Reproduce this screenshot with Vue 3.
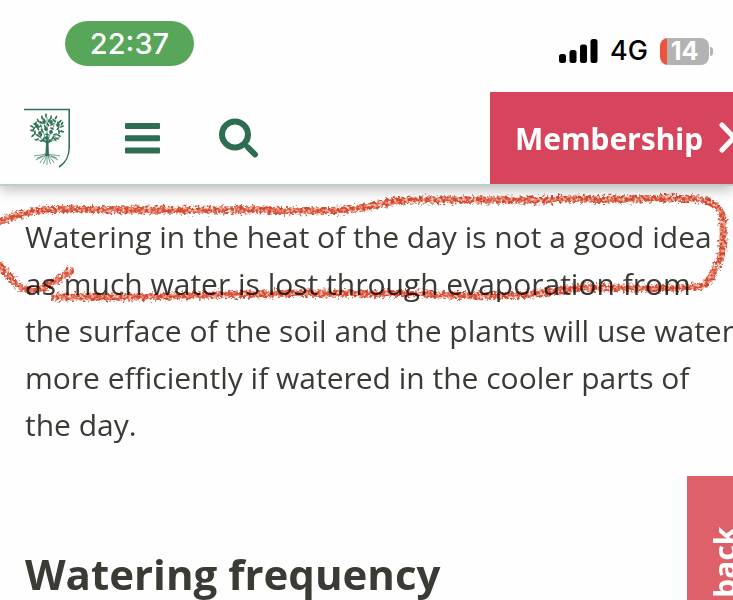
<script setup>
const paragraph = [
  'Watering in the heat of the day is not a good idea',
  'as much water is lost through evaporation from',
  'the surface of the soil and the plants will use water',
  'more efficiently if watered in the cooler parts of',
  'the day.',
]

const leaves = [
  [11, 16, 40], [14, 12, 60], [18, 9, 80], [22, 7, 90], [27, 9, 100], [32, 9, 120],
  [36, 13, 140], [38, 18, 160], [38, 23, 10], [35, 27, 30], [31, 31, 50], [26, 32, 20],
  [18, 32, 150], [13, 31, 160], [9, 27, 140], [8, 22, 10], [8, 18, 30], [14, 20, 60],
  [14, 27, 30], [17, 14, 40], [25, 12, 110], [30, 12, 40], [34, 20, 130], [31, 26, 160],
  [18, 22, 60], [17, 27, 120], [21, 18, 70], [28, 20, 20], [20, 30, 110], [11, 24, 90],
  [34, 15, 80], [20, 11, 50], [29, 29, 120], [10, 20, 130], [35, 23, 80], [23, 26, 10],
  [28, 16, 150], [12, 15, 100], [24, 16, 60], [16, 18, 160], [33, 30, 20], [38, 15, 120],
]

const fruits = [[13, 18], [20, 14], [27, 14], [34, 17], [22, 21], [27, 24], [16, 25], [23, 30]]
</script>

<template>
  <div class="page">
    <div class="status">
      <span class="clock">22:37</span>
      <div class="indicators">
        <svg class="signal" viewBox="0 0 39 25" aria-hidden="true">
          <rect x="0" y="15" width="7" height="9" rx="2.5" />
          <rect x="10.500" y="11" width="7" height="13" rx="2.500" />
          <rect x="21" y="5.500" width="7" height="18.500" rx="2.500" />
          <rect x="31.500" y="0" width="7" height="24" rx="2.500" />
        </svg>
        <span class="network">4G</span>
        <span class="battery">14</span>
      </div>
    </div>

    <header class="bar">
      <nav class="tools">
        <a class="logo" href="#" aria-label="Home">
          <svg viewBox="0 0 48 60" aria-hidden="true">
            <path class="line" d="M0 1.500H45.200V39C45.200 50 41 55 35 59" />
            <path class="trunk" d="M21.300 48L22 35L17 30L22.600 33L23 24L24 33L30 29L24.500 35L25 48Z" />
            <path
              class="twigs"
              d="M23 35L10 25M23 34L15 13M23 33L23 9M23 34L32 12M24 35L38 22M22 34L10 31M24 35L36 29"
            />
            <ellipse
              v-for="(l, i) in leaves"
              :key="i"
              :cx="l[0]"
              :cy="l[1] + 0.500"
              rx="2.200"
              ry="0.900"
              :transform="`rotate(${l[2]} ${l[0]} ${l[1] + 0.500})`"
            />
            <circle v-for="(f, i) in fruits" :key="'f' + i" :cx="f[0]" :cy="f[1]" r="1.900" />
            <path
              class="twigs"
              d="M22 46C19 47 15 47 10 48M22 46C19 49 15 50 12 52M22 47C20 50 17 52 16 55M22.500 47C22 51 20 53 19.500 56M23 46V57M24 47C24.500 51 26 53 26.500 56M24 47C26 50 29 52 30 55M24 46C27 49 31 50 34 52M24 46C27 47 31 47 36 48M19 48L13 50M27 48L33 50"
            />
          </svg>
        </a>
        <button class="icon" type="button" aria-label="Menu">
          <svg class="menu" viewBox="0 0 35 31" aria-hidden="true">
            <rect width="35" height="6" rx="1" />
            <rect y="12.300" width="35" height="6" rx="1" />
            <rect y="24.600" width="35" height="6" rx="1" />
          </svg>
        </button>
        <button class="icon" type="button" aria-label="Search">
          <svg class="search" viewBox="0 0 40 40" aria-hidden="true">
            <circle cx="16" cy="16.500" r="13" />
            <path class="neck" d="M24 24.500L30 30.500" />
            <path class="handle" d="M29.500 30L36 36.500" />
          </svg>
        </button>
      </nav>
      <a class="membership" href="#">
        <span>Membership</span>
        <svg viewBox="0 0 20 32" aria-hidden="true">
          <path d="M4 3L16 15.500L4 28" />
        </svg>
      </a>
    </header>

    <main class="content">
      <p><span v-for="line in paragraph" :key="line" class="row">{{ line }}</span></p>
      <h2>Watering frequency</h2>
    </main>

    <svg class="crayon" viewBox="0 0 733 130" aria-hidden="true">
      <defs>
        <filter id="wax" filterUnits="userSpaceOnUse" x="-10" y="-5" width="760" height="140" color-interpolation-filters="sRGB">
          <feTurbulence type="fractalNoise" baseFrequency="0.350" numOctaves="2" seed="4" result="noise" />
          <feDisplacementMap in="SourceGraphic" in2="noise" scale="9" xChannelSelector="R" yChannelSelector="G" result="rough" />
          <feColorMatrix in="noise" type="matrix" values="0 0 0 0 0  0 0 0 0 0  0 0 0 0 0  0 0 2 0 -0.200" result="grain" />
          <feComposite in="rough" in2="grain" operator="in" result="mark" />
          <feGaussianBlur in="mark" stdDeviation="0.700" />
        </filter>
      </defs>
      <g filter="url(#wax)">
        <path d="M-6 34C10 27 25 22 45 19.500C100 18 170 22 240 19.500C280 20 310 22 345 20C368 18 378 13 400 10.500C450 8 510 12 570 9C620 11 660 6 698 9C718 12 724 21 723 37C724 55 722 69 714 82C708 93 704 97 696 97C660 100 620 97 580 98C560 99 550 103 530 104C500 107 470 106 440 105C400 102 370 105 330 103C240 103 180 107 120 107L52 107" />
        <path d="M-6 69C4 77 8 88 20 97C36 105 52 95 73 79" />
      </g>
    </svg>

    <button class="feedback" type="button">Feedback</button>
  </div>
</template>

<style>
body {
  margin: 0;
  background: #fefefe;
}
</style>

<style scoped>
.page {
  position: relative;
  height: 100vh;
  overflow: hidden;
  background: #fefefe;
  color: #3c3a35;
  font-family: "Open Sans", "Noto Sans", sans-serif;
}

.status {
  position: relative;
  z-index: 1;
  display: flex;
  justify-content: space-between;
  box-sizing: border-box;
  height: 92px;
  padding: 21px 24px 0 65px;
  background: #fefefe;
  font-family: Inter, "Liberation Sans", sans-serif;
}

.clock {
  width: 129px;
  height: 45px;
  border-radius: 23px;
  background: #57a65a;
  color: #fff;
  font-size: 29px;
  font-weight: 500;
  line-height: 46px;
  text-align: center;
}

.indicators {
  display: flex;
  align-items: center;
  height: 60px;
  gap: 12px;
  color: #000;
}

.signal {
  width: 39px;
  height: 25px;
}

.network {
  font-size: 27px;
  font-weight: 500;
  line-height: 32px;
}

.battery {
  position: relative;
  width: 49px;
  height: 27px;
  border-radius: 8px;
  background: linear-gradient(to right, #ee5340 7px, #b3b3b3 7px);
  color: #fff;
  font-size: 25px;
  font-weight: 700;
  line-height: 27px;
  text-align: center;
}

.battery::after {
  content: "";
  position: absolute;
  top: 9px;
  right: -4px;
  width: 3px;
  height: 9px;
  border-radius: 0 4px 4px 0;
  background: #b3b3b3;
}

.bar {
  position: relative;
  display: flex;
  justify-content: space-between;
  height: 92px;
  border-bottom: 2px solid #b9cfc7;
  box-shadow: 0 4px 12px rgba(0, 0, 0, 0.25);
}

.tools {
  display: flex;
  align-items: center;
  padding-left: 24px;
}

.logo {
  height: 60px;
  margin-right: 53px;
}

.logo svg {
  width: 48px;
  height: 60px;
  fill: #2f7257;
}

.logo .line {
  fill: none;
  stroke: #2f7257;
  stroke-width: 1.600;
}

.logo .twigs {
  fill: none;
  stroke: #2f7257;
  stroke-width: 0.700;
}

.icon {
  display: flex;
  margin: 0 59px 0 0;
  padding: 0;
  border: 0;
  background: none;
}

.menu {
  width: 35px;
  height: 31px;
  fill: #2d6e52;
}

.search {
  width: 40px;
  height: 40px;
  fill: none;
  stroke: #2d6e52;
  stroke-width: 6;
}

.search .handle {
  stroke-width: 6;
  stroke-linecap: round;
}

.search .neck {
  stroke-width: 5;
}

.membership {
  display: flex;
  align-items: center;
  box-sizing: border-box;
  width: 243px;
  padding-left: 25px;
  gap: 15px;
  background: #d7455c;
  color: #fff;
  font-family: "Noto Sans", sans-serif;
  font-size: 30px;
  font-weight: 700;
  text-decoration: none;
}

.membership svg {
  flex: none;
  width: 20px;
  height: 32px;
  fill: none;
  stroke: #fff;
  stroke-width: 5;
  stroke-linecap: round;
}

.content {
  padding: 27px 0 0 25px;
}

p {
  margin: 0 0 98px;
  font-size: 30px;
  font-weight: 400;
  line-height: 47px;
}

.row {
  display: block;
  white-space: nowrap;
}

h2 {
  margin: 0;
  font-size: 42px;
  font-weight: 700;
  line-height: 56px;
  white-space: nowrap;
}

.crayon {
  position: absolute;
  top: 190px;
  left: 0;
  width: 733px;
  height: 130px;
  fill: none;
  stroke: #d8482c;
  stroke-width: 7;
  mix-blend-mode: multiply;
  pointer-events: none;
}

.feedback {
  position: absolute;
  top: 476px;
  right: -30px;
  width: 76px;
  height: 240px;
  padding: 0 0 51px;
  border: 0;
  background: #de6169;
  color: #fff;
  font-family: "Noto Sans", sans-serif;
  font-size: 30px;
  font-weight: 700;
  line-height: 40px;
  text-align: right;
  writing-mode: vertical-rl;
  transform: rotate(180deg);
}
</style>
